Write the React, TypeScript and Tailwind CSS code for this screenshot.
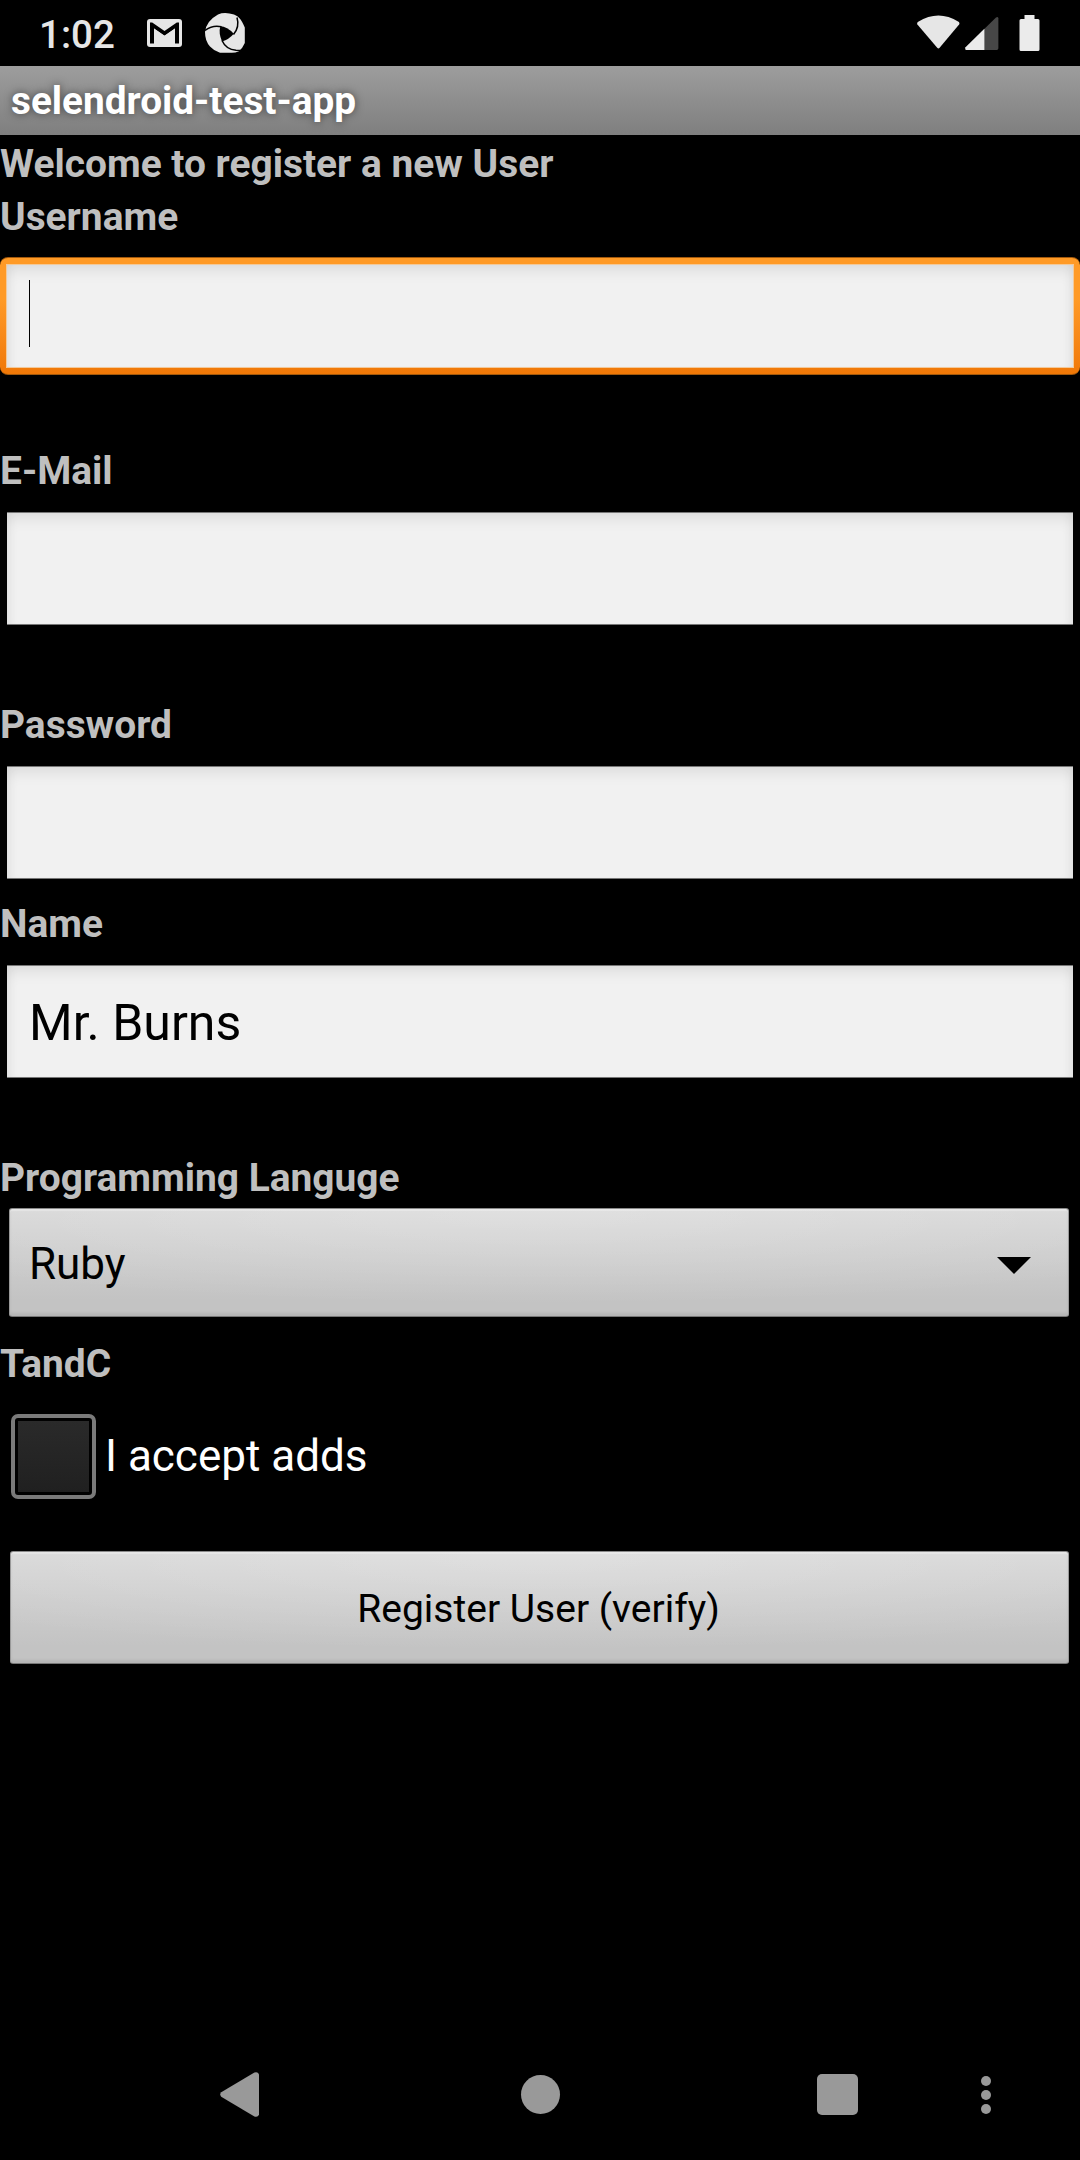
import type { ReactNode } from "react";

function StatusBar() {
  return (
    <header className="flex h-[66px] items-center pl-[39px] pr-[40px]">
      <span className="mt-[3px] w-[108px] text-[38.5px] leading-[45px] font-medium text-[#e6e6e6]">1:02</span>
      <svg className="h-[28px] w-[35px]" viewBox="0 0 35 28">
        <rect width="35" height="28" rx="3" fill="#e6e6e6" />
        <path d="M3 24.5V3.6h2.2L17.5 12 29.8 3.6H32v20.9h-4V9.4L17.5 16.8 7 9.4v15.1z" fill="#000" />
        <path d="M7 25V9.4L17.5 16.8 28 9.4V25z" fill="#e6e6e6" />
      </svg>
      <svg className="ml-[23px] h-[40px] w-[40px]" viewBox="0 0 40 40">
        <path
          d="M13 1.4Q20 -1.3 29 1.6Q33 3 34.5 5.3Q37 8 39.8 14.5V30L37.2 34.7L34 38.2Q30 40 26 39.8H15Q9 38 5 33.5Q0 28 0 19Q1 8 13 1.4Z"
          fill="#e6e6e6"
        />
        <path d="M15.3 13.2Q22 13.2 28.8 20.8Q24 26.5 17 28.6Q13.4 20 15.3 13.2Z" fill="#000" />
        <g fill="none" stroke="#000" strokeWidth="1.5">
          <path d="M0 17.5Q8 11.5 16.5 13.8" />
          <path d="M28.5 21.5Q34.8 14 32 4.5" />
          <path d="M17 27.5Q21 36.5 31 37.3L36 37.5" />
        </g>
      </svg>
      <svg className="ml-auto h-[36px] w-[123px]" viewBox="0 0 123 36">
        <path d="M.4 9.6Q-.4 8 1.2 6.8Q21.5-5.8 41.5 6.8Q43 8 42.1 9.6L22.6 32.8Q21.4 34.2 20.2 32.8Z" fill="#e6e6e6" />
        <path d="M50 35Q47.4 35 48.6 32.2L79 2.4Q81.3 1 81.4 3.4V33.3Q81.4 35 79.7 35Z" fill="#474747" />
        <path d="M50 35Q47.4 35 48.6 32.2L67.4 13.8V35Z" fill="#ebebeb" />
        <path d="M107.5 0h10v4H121q1.5 0 1.5 1.5v29q0 1.5-1.5 1.5h-17q-1.5 0-1.5-1.5v-29q0-1.5 1.5-1.5h3.5z" fill="#ebebeb" />
      </svg>
    </header>
  );
}

function Label({ children }: { children: ReactNode }) {
  return <div className="h-[53px] text-[38.9px] leading-[53px] font-bold whitespace-nowrap text-[#bfbfbf]">{children}</div>;
}

const surface =
  "h-full bg-[#f1f1f1] shadow-[inset_0_10px_16px_-6px_rgba(0,0,0,0.1),inset_9px_0_12px_-8px_rgba(0,0,0,0.07),inset_-9px_0_12px_-8px_rgba(0,0,0,0.07)]";

function Field({ label, value, focused }: { label: string; value?: string; focused?: boolean }) {
  return (
    <div>
      <Label>{label}</Label>
      {focused ? (
        <div className="mt-[14px] h-[118px] rounded-[8px] border-y border-[#a3590c] bg-linear-to-b from-[#ff9a26] from-35% to-[#f07806] px-[6px] py-[6px]">
          <div className={surface + " border border-[#f3c999] pt-[15px] pl-[22px]"}>
            <div className="h-[67px] w-px bg-black" />
          </div>
        </div>
      ) : (
        <div className="mt-[14px] h-[118px] px-[7px] pt-px pb-[4px]">
          <div className={surface + " flex items-center border-y border-t-[#777] border-b-[#777] pt-[2px] pl-[22px] text-[50px] leading-[58px] text-black"}>
            {value}
          </div>
        </div>
      )}
    </div>
  );
}

const metal =
  "rounded-[3px] border border-t-[#8a8a8a] border-r-[#999] border-b-[#777] border-l-[#999] bg-[radial-gradient(ellipse_75%_90%_at_50%_0%,rgba(255,255,255,0.22),transparent),linear-gradient(to_bottom,#d8d8d8,#c3c3c3_85%,#c3c3c3)] shadow-[inset_0_2px_1px_rgba(255,255,255,0.3),inset_0_-3px_3px_rgba(0,0,0,0.07)]";

function NavBar() {
  return (
    <nav className="mt-auto flex h-[132px] items-center pt-px">
      <svg className="ml-[220px] h-[45px] w-[39px]" viewBox="0 0 39 45">
        <path d="M1.2 20.3L34.4.6Q37.5-.8 39 2.2V42.8Q37.5 45.8 34.4 44.4L1.2 24.7Q-.7 22.5 1.2 20.3Z" fill="#999" />
      </svg>
      <div className="ml-[262px] size-[39px] rounded-full bg-[#999]" />
      <div className="ml-[257px] size-[41px] rounded-[5px] bg-[#999]" />
      <div className="ml-[123px] flex flex-col gap-[4px]">
        <i className="size-[10px] rounded-full bg-[#999]" />
        <i className="size-[10px] rounded-full bg-[#999]" />
        <i className="size-[10px] rounded-full bg-[#999]" />
      </div>
    </nav>
  );
}

export default function App() {
  return (
    <div className="flex h-[2160px] w-[1080px] flex-col overflow-hidden bg-black font-[Roboto,sans-serif]">
      <StatusBar />
      <h1 className="h-[69px] bg-linear-to-b from-[#9d9d9d] to-[#7f7f7f] pl-[11px] text-[38.75px] leading-[70px] font-bold text-white [text-shadow:0_0_8px_rgba(0,0,0,0.55)]">
        selendroid-test-app
      </h1>
      <main className="pt-[2px]">
        <Label>Welcome to register a new User</Label>
        <Field label="Username" focused />
        <div className="mt-[69px]">
          <Field label="E-Mail" />
        </div>
        <div className="mt-[69px]">
          <Field label="Password" />
        </div>
        <div className="mt-[14px]">
          <Field label="Name" value="Mr. Burns" />
        </div>
        <div className="mt-[69px]">
          <Label>Programming Languge</Label>
          <div className={metal + " mt-[4px] mr-[11px] ml-[9px] flex h-[109px] items-center justify-between pt-[2px] pr-[37px] pl-[19px] text-[44px] leading-[52px] text-black"}>
            <span>Ruby</span>
            <svg className="mt-[4px] h-[17px] w-[34px]" viewBox="0 0 34 17">
              <path d="M0 0H34L17 17Z" fill="#000" />
            </svg>
          </div>
        </div>
        <div className="mt-[20px]">
          <Label>TandC</Label>
          <label className="mt-[23px] ml-[11px] flex h-[86px] items-center text-[44px] leading-[52px] text-white">
            <span className="size-[85px] rounded-[7px] border-[4px] border-[#7a7a7a] p-[3px]">
              <span className="block size-full bg-linear-to-b from-[#2a2a2a] to-[#202020]" />
            </span>
            <span className="ml-[9px]">I accept adds</span>
          </label>
        </div>
        <button className={metal + " mt-[52px] ml-[10px] flex h-[113px] w-[1059px] items-center justify-center pt-[4px] pr-[2px] text-[39px] leading-[45px] text-black"}>
          Register User (verify)
        </button>
      </main>
      <NavBar />
    </div>
  );
}
